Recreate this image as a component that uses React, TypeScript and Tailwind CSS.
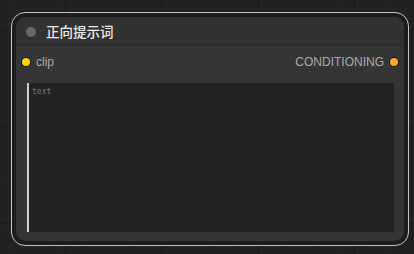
import React from 'react'

export default function App() {
  return (
    <div className="w-[414px] h-[254px] overflow-hidden bg-[#222222] bg-[linear-gradient(to_right,#1a1a1a_1px,transparent_1px),linear-gradient(to_bottom,#1a1a1a_1px,transparent_1px),linear-gradient(to_right,#1e1e1e_1px,transparent_1px),linear-gradient(to_bottom,#1e1e1e_1px,transparent_1px)] bg-[size:96.4px_96.4px,96.4px_96.4px,9.64px_9.64px,9.64px_9.64px] bg-[position:65px_30px,65px_30px,7px_1px,7px_1px] pl-[11px] pt-[12px]">
      {/* selection outline */}
      <div className="w-[398px] h-[234px] rounded-[14px] border-[1.5px] border-[#c4c4c4] p-[4px] bg-[#1b1b1b]/60">
        {/* node */}
        <div className="w-full h-full rounded-[10px] bg-[#353535] flex flex-col overflow-hidden">
          {/* title */}
          <div className="h-[29px] shrink-0 flex items-center pt-[2px] bg-[#323232] border-b border-[#2c2c2c]">
            <div className="ml-[10px] w-[10px] h-[10px] rounded-full bg-[#666666]" />
            <span className="ml-[10px] text-[13.5px] text-[#ececec] font-medium font-['Noto_Sans_CJK_SC',sans-serif] leading-none">
              正向提示词
            </span>
          </div>

          {/* slots */}
          <div className="h-[30px] shrink-0 flex items-center pt-[2px] justify-between font-['Liberation_Sans',Arial,sans-serif] text-[12px] text-[#aaaaaa]">
            <div className="flex items-center">
              <div className="ml-[6px] w-[8px] h-[8px] rounded-full bg-[#ffd500] ring-1 ring-[#1a1a1a]" />
              <span className="ml-[6px]">clip</span>
            </div>
            <div className="flex items-center">
              <span className="mr-[6px]">CONDITIONING</span>
              <div className="mr-[6px] w-[8px] h-[8px] rounded-full bg-[#ffa931] ring-1 ring-[#1a1a1a]" />
            </div>
          </div>

          {/* text widget */}
          <div className="flex-1 mt-[7px] mb-[9px] ml-[11px] mr-[10px] bg-[#222222] border-l-2 border-[#d0d0d0] pl-[3px] pt-[5px]">
            <span className="block font-['DejaVu_Sans_Mono',monospace] text-[8px] text-[#777777] leading-none">
              text
            </span>
          </div>
        </div>
      </div>
    </div>
  )
}
